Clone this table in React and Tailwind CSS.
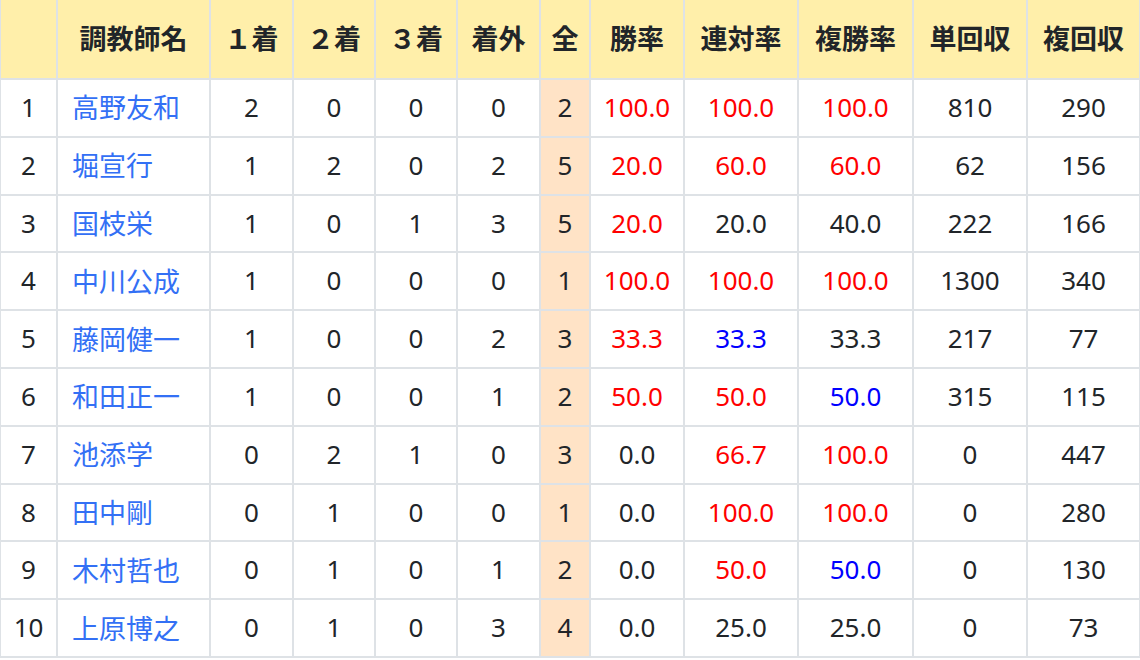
const rows = [
  ["高野友和", 2, 0, 0, 0, 2, ["100.0", "r"], ["100.0", "r"], ["100.0", "r"], 810, 290],
  ["堀宣行", 1, 2, 0, 2, 5, ["20.0", "r"], ["60.0", "r"], ["60.0", "r"], 62, 156],
  ["国枝栄", 1, 0, 1, 3, 5, ["20.0", "r"], ["20.0", ""], ["40.0", ""], 222, 166],
  ["中川公成", 1, 0, 0, 0, 1, ["100.0", "r"], ["100.0", "r"], ["100.0", "r"], 1300, 340],
  ["藤岡健一", 1, 0, 0, 2, 3, ["33.3", "r"], ["33.3", "b"], ["33.3", ""], 217, 77],
  ["和田正一", 1, 0, 0, 1, 2, ["50.0", "r"], ["50.0", "r"], ["50.0", "b"], 315, 115],
  ["池添学", 0, 2, 1, 0, 3, ["0.0", ""], ["66.7", "r"], ["100.0", "r"], 0, 447],
  ["田中剛", 0, 1, 0, 0, 1, ["0.0", ""], ["100.0", "r"], ["100.0", "r"], 0, 280],
  ["木村哲也", 0, 1, 0, 1, 2, ["0.0", ""], ["50.0", "r"], ["50.0", "b"], 0, 130],
  ["上原博之", 0, 1, 0, 3, 4, ["0.0", ""], ["25.0", ""], ["25.0", ""], 0, 73],
];

const headers = ["", "調教師名", "１着", "２着", "３着", "着外", "全", "勝率", "連対率", "複勝率", "単回収", "複回収"];
const widths = [57, 153, 83, 82, 82, 83, 50, 94, 114, 115, 114, 113];

const rateClass = (c) =>
  c === "r" ? "text-[#ff0000]" : c === "b" ? "text-[#0000ff]" : "text-[#212529]";

const cell = "border-2 border-[#dee2e6] h-[57.8px] p-0 leading-[1.3] text-center align-middle";

export default function App() {
  return (
    <div
      className="bg-white text-[#212529] text-[26px]"
      style={{ fontFamily: '"Noto Sans", "Noto Sans CJK JP", sans-serif' }}
    >
      <table className="table-fixed border-collapse w-[1140px] -ml-px">
        <colgroup>
          {widths.map((w, i) => (
            <col key={i} style={{ width: w }} />
          ))}
        </colgroup>
        <thead>
          <tr className="bg-[#ffefaa]">
            {headers.map((h, i) => (
              <th
                key={i}
                className="border-2 border-t-0 border-[#dee2e6] h-[79px] text-center align-middle font-bold text-[27px]"
              >
                {h}
              </th>
            ))}
          </tr>
        </thead>
        <tbody>
          {rows.map((r, i) => (
            <tr key={i}>
              <td className={cell}>{i + 1}</td>
              <td className="border-2 border-[#dee2e6] h-[57.8px] p-0 leading-[1.3] text-left align-middle pl-[14px] text-[27px] text-[#3370f5]">
                {r[0]}
              </td>
              <td className={cell}>{r[1]}</td>
              <td className={cell}>{r[2]}</td>
              <td className={cell}>{r[3]}</td>
              <td className={cell}>{r[4]}</td>
              <td className={`${cell} bg-[#ffe3c6]`}>{r[5]}</td>
              <td className={`${cell} ${rateClass(r[6][1])}`}>{r[6][0]}</td>
              <td className={`${cell} ${rateClass(r[7][1])}`}>{r[7][0]}</td>
              <td className={`${cell} ${rateClass(r[8][1])}`}>{r[8][0]}</td>
              <td className={cell}>{r[9]}</td>
              <td className={cell}>{r[10]}</td>
            </tr>
          ))}
        </tbody>
      </table>
    </div>
  );
}
